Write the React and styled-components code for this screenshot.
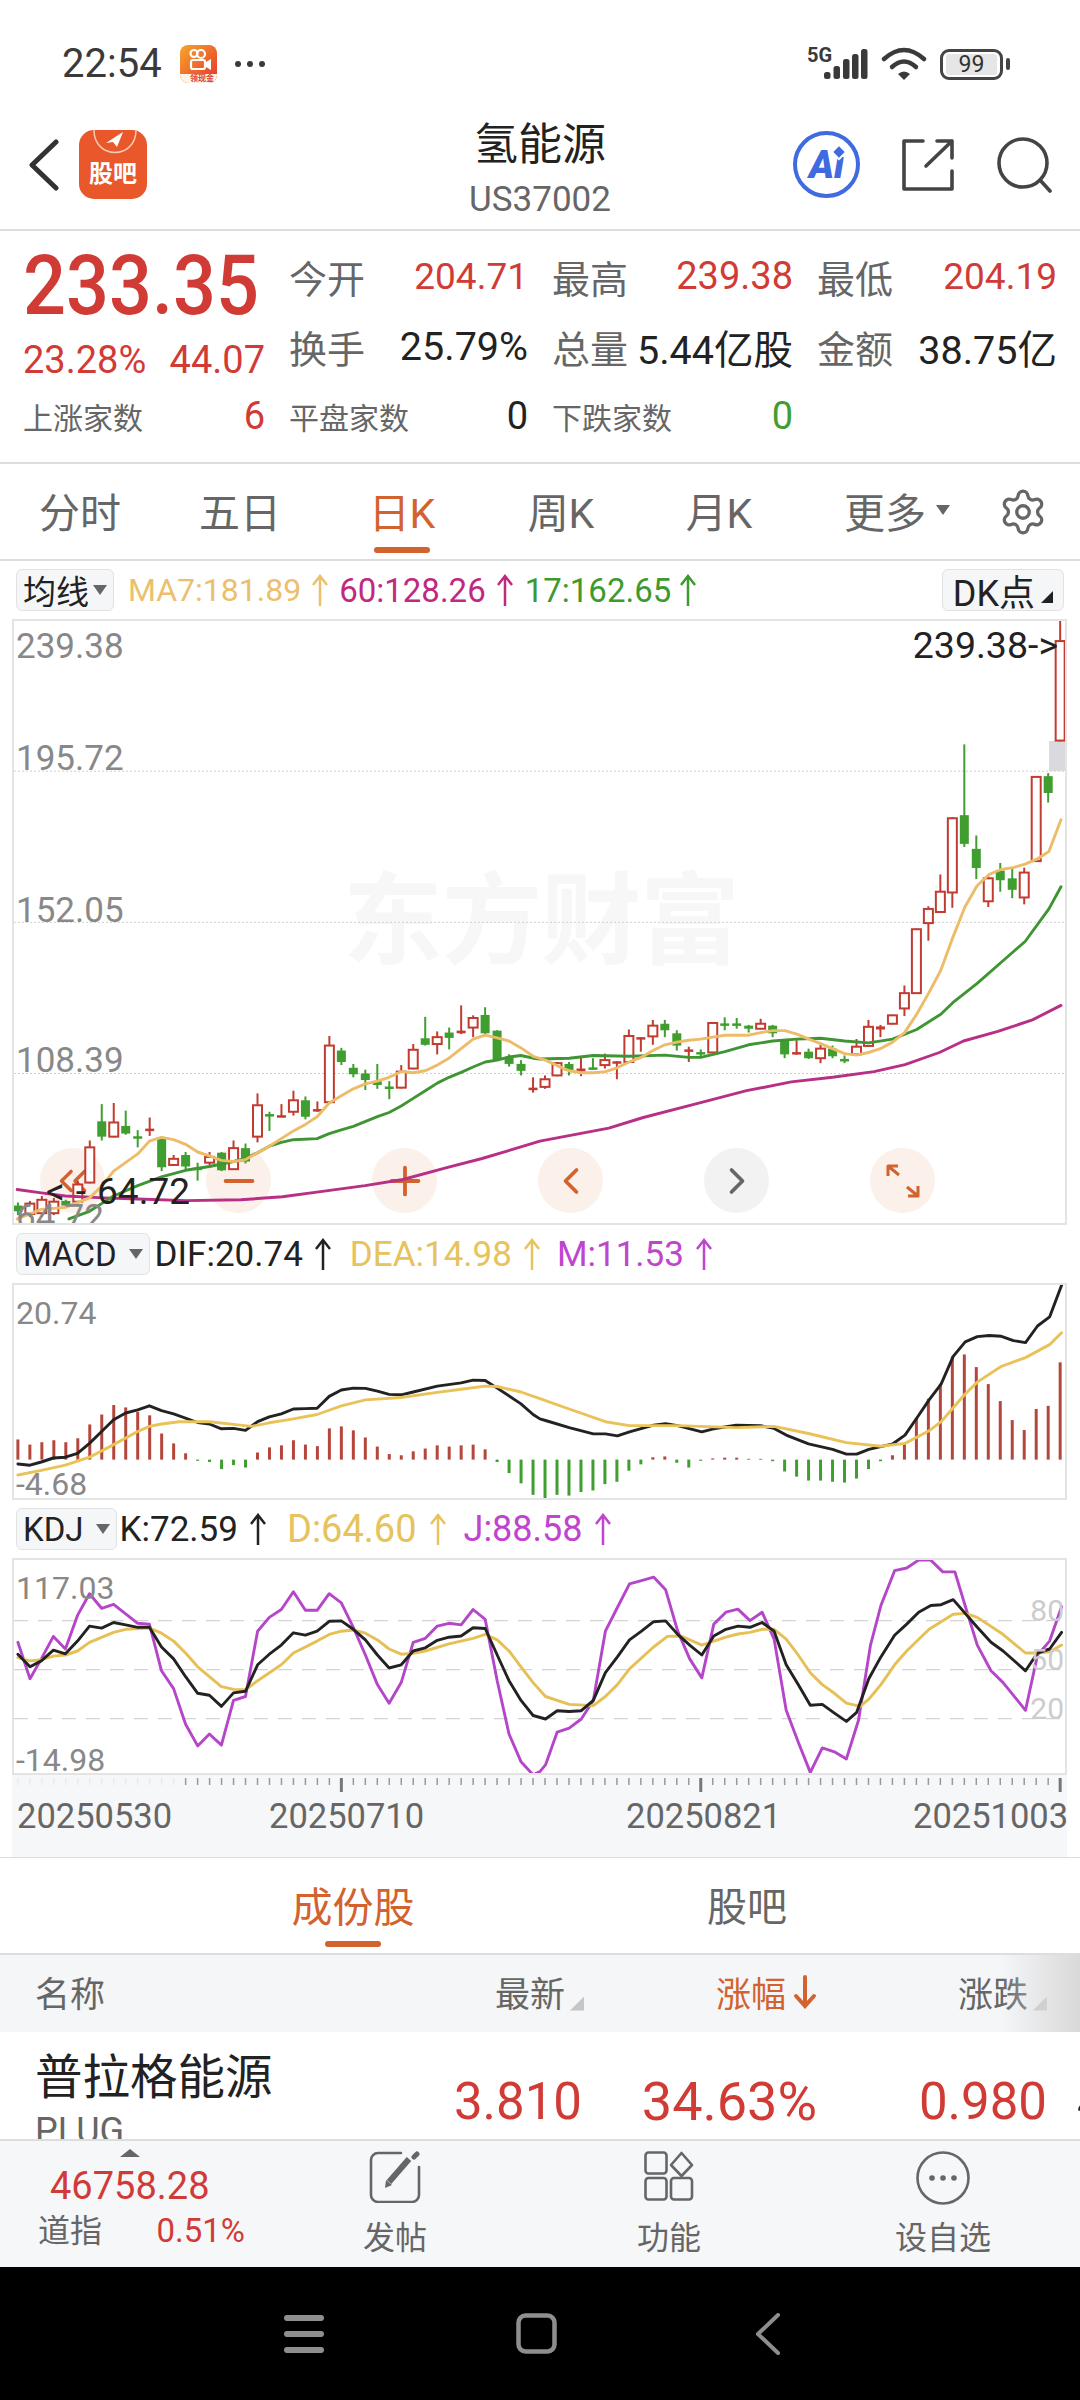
import React from "react";
import styled, { createGlobalStyle } from "styled-components";
import { ChevronLeft, ChevronRight, ChevronsLeft, Minus, Plus, Settings } from "lucide-react";

const RED = "#d13b36";
const GREEN = "#3f9e2f";
const ORANGE = "#d2622e";
const GOLD = "#e6c35c";
const PURPLE = "#bf45cf";

const GlobalStyle = createGlobalStyle`
  html, body {
    margin: 0;
    padding: 0;
    background: #fff;
    font-family: Roboto, "Noto Sans CJK SC", sans-serif;
  }
  * { box-sizing: border-box; }
`;

const Page = styled.div`
  width: 1080px;
  height: 2400px;
  overflow: hidden;
  display: flex;
  flex-direction: column;
  background: #fff;
  color: #222;
`;

/* status bar */
const StatusBar = styled.div`
  height: 100px;
  padding: 28px 70px 0 62px;
  display: flex;
  align-items: center;
  color: #3a3a3a;
`;
const Clock = styled.div`
  font-size: 40px;
  line-height: 44px;
  width: 118px;
`;
const MoreDots = styled.div`
  margin-left: 18px;
  display: flex;
  gap: 6px;
  i {
    width: 6px;
    height: 6px;
    border-radius: 50%;
    background: #3a3a3a;
  }
`;
const StatusRight = styled.div`
  margin-left: auto;
  display: flex;
  align-items: center;
  gap: 13px;
`;
const Battery = styled.div`
  position: relative;
  width: 63px;
  height: 31px;
  border: 3px solid #444;
  border-radius: 9px;
  padding: 2px 3px;
  margin-right: 7px;
  &::after {
    content: "";
    position: absolute;
    right: -10px;
    top: 6px;
    width: 4px;
    height: 12px;
    border-radius: 2px;
    background: #444;
  }
`;
const BatteryFill = styled.div`
  height: 100%;
  background: #e6e6e6;
  border-radius: 3px;
  display: flex;
  align-items: center;
  justify-content: center;
  font-size: 23px;
  line-height: 1;
  color: #333;
`;

/* header */
const Header = styled.div`
  height: 131px;
  border-bottom: 2px solid #ddd;
  display: grid;
  grid-template-columns: 1fr auto 1fr;
  align-items: center;
`;
const HeaderLeft = styled.div`
  padding-left: 29px;
  display: flex;
  align-items: center;
  gap: 20px;
`;
const Logo = styled.div`
  position: relative;
  width: 68px;
  height: 69px;
  border-radius: 15px;
  background: #e9582a;
  overflow: hidden;
  color: #fff;
  font-size: 24px;
  font-weight: 700;
  line-height: 24px;
  text-align: center;
  padding-top: 32px;
  white-space: nowrap;
  svg {
    position: absolute;
    left: 0;
    top: 0;
  }
`;
const TitleBlock = styled.div`
  padding-top: 10px;
  text-align: center;
`;
const Title = styled.div`
  font-size: 44px;
  line-height: 52px;
  color: #222;
`;
const SubTitle = styled.div`
  margin-top: 9px;
  font-size: 35px;
  line-height: 40px;
  color: #666;
`;
const HeaderRight = styled.div`
  padding-right: 28px;
  display: flex;
  align-items: center;
  justify-content: flex-end;
  gap: 41px;
`;
const AiBadge = styled.div`
  position: relative;
  width: 67px;
  height: 67px;
  border: 4px solid #3f6ae0;
  border-radius: 50%;
  display: flex;
  align-items: center;
  justify-content: center;
  color: #3f6ae0;
  font-size: 38px;
  font-weight: 900;
  font-style: italic;
  &::after {
    content: "";
    position: absolute;
    left: 38px;
    top: 13px;
    width: 8px;
    height: 8px;
    background: #3f6ae0;
    transform: rotate(45deg);
    box-shadow: 0 0 0 2px #fff;
  }
`;

/* quote block */
const Quote = styled.div`
  height: 233px;
  padding: 10px 0 0 23px;
  border-bottom: 2px solid #ddd;
  display: grid;
  grid-template-columns: 242px 239px 241px 240px;
  grid-auto-rows: 70px;
  column-gap: 24px;
`;
const PriceBlock = styled.div`
  grid-row: span 2;
  display: flex;
  flex-direction: column;
`;
const Price = styled.div`
  font-size: 84px;
  line-height: 90px;
  font-weight: 500;
  color: ${RED};
  margin-top: 0;
  transform: scaleX(0.9);
  transform-origin: left center;
  white-space: nowrap;
`;
const PriceChange = styled.div`
  margin-top: 7px;
  display: flex;
  justify-content: space-between;
  font-size: 38px;
  line-height: 44px;
  color: ${RED};
`;
const Cell = styled.div`
  display: flex;
  align-items: center;
  justify-content: space-between;
  white-space: nowrap;
`;
const CellLabel = styled.span`
  font-size: ${({ $small }) => ($small ? "30px" : "38px")};
  color: #666;
`;
const CellValue = styled.span`
  font-size: ${({ $size }) => $size || 37}px;
  color: ${({ $color }) => $color || "#222"};
`;

/* tabs */
const PeriodTabs = styled.div`
  height: 97px;
  border-bottom: 2px solid #ddd;
  display: flex;
  align-items: center;
`;
const Tab = styled.div`
  position: relative;
  width: ${({ $width }) => $width}px;
  height: 95px;
  padding-bottom: 4px;
  display: flex;
  align-items: center;
  justify-content: center;
  font-size: ${({ $size }) => $size || 41}px;
  color: ${({ $active }) => ($active ? ORANGE : "#666")};
  &::after {
    content: "";
    display: ${({ $active }) => ($active ? "block" : "none")};
    position: absolute;
    left: 50%;
    bottom: 6px;
    width: 56px;
    height: 6px;
    margin-left: -28px;
    border-radius: 3px;
    background: ${ORANGE};
  }
`;
const Caret = styled.i`
  display: inline-block;
  margin-left: ${({ $gap }) => $gap || 6}px;
  border-left: 7px solid transparent;
  border-right: 7px solid transparent;
  border-top: 10px solid #666;
`;
const GearSlot = styled.div`
  margin-left: 4px;
  display: flex;
  color: #666;
`;

/* charts */
const ChartSection = styled.div`
  padding: 0 13px 0 12px;
  border-bottom: 1px solid #ddd;
`;
const IndicatorBar = styled.div`
  height: 58px;
  padding: 0 3px 0 4px;
  display: flex;
  align-items: center;
  white-space: nowrap;
`;
const IndicatorSelect = styled.div`
  height: 42px;
  padding: 0 ${({ $right }) => ($right ? 10 : 6)}px;
  margin-right: ${({ $gap }) => $gap}px;
  margin-left: ${({ $right }) => ($right ? "auto" : "0")};
  display: flex;
  align-items: center;
  background: #f5f6f8;
  border: 1px solid #e2e2e2;
  border-radius: 6px;
  font-size: ${({ $size }) => $size || 33}px;
  color: #222;
`;
const CornerMark = styled.i`
  width: 12px;
  height: 12px;
  margin: 14px 0 0 6px;
  background: #222;
  clip-path: polygon(100% 0, 100% 100%, 0 100%);
`;
const Reading = styled.span`
  display: inline-flex;
  align-items: center;
  gap: ${({ $arrowGap }) => $arrowGap || 10}px;
  margin-right: ${({ $gap }) => $gap}px;
  font-size: ${({ $size }) => $size || 33}px;
  color: ${({ $color }) => $color};
`;
const ChartBox = styled.div`
  position: relative;
  height: ${({ $height }) => $height}px;
  border: 2px solid #e4e4e4;
  overflow: hidden;
  svg.plot {
    position: relative;
    z-index: 1;
    display: block;
  }
`;
const AxisLabel = styled.div`
  position: absolute;
  z-index: 2;
  top: ${({ $top }) => $top}px;
  left: ${({ $right, $left }) => ($right === undefined ? `${$left ?? 2}px` : "auto")};
  right: ${({ $right }) => ($right === undefined ? "auto" : `${$right}px`)};
  font-size: ${({ $size }) => $size || 35}px;
  line-height: 40px;
  color: ${({ $color }) => $color || "#888"};
  white-space: nowrap;
`;
const PointerHead = styled.span`
  letter-spacing: 11px;
`;
const Watermark = styled.div`
  position: absolute;
  left: 329px;
  top: 249px;
  font-size: 100px;
  line-height: 104px;
  font-weight: 700;
  letter-spacing: -1px;
  color: #f7f7f7;
  white-space: nowrap;
`;
const ZoomRow = styled.div`
  position: absolute;
  left: 26px;
  top: 527px;
  display: flex;
  gap: 101px;
`;
const ZoomButton = styled.div`
  width: 65px;
  height: 65px;
  border-radius: 50%;
  display: flex;
  align-items: center;
  justify-content: center;
  background: ${({ $muted }) => ($muted ? "#f2f2f2" : "#fbf1ea")};
  color: ${({ $muted }) => ($muted ? "#666" : ORANGE)};
`;
const DateStrip = styled.div`
  height: 82px;
  background: #f6f7f9;
  svg {
    display: block;
  }
`;
const DateRow = styled.div`
  padding-left: 5px;
  display: grid;
  grid-template-columns: 252px 357px 287px 1fr;
  font-size: 34.5px;
  line-height: 46px;
  color: #666;
`;

/* list */
const SubTabs = styled.div`
  height: 97px;
  padding-left: 156px;
  border-bottom: 2px solid #ddd;
  display: flex;
`;
const ListGrid = styled.div`
  padding-left: 35px;
  display: grid;
  grid-template-columns: 400px 149px 233px 230px 120px;
`;
const TableHead = styled(ListGrid)`
  position: relative;
  height: 77px;
  padding-bottom: 4px;
  align-items: center;
  background: #f5f6f8;
  font-size: 35px;
  color: #666;
  &::after {
    content: "";
    position: absolute;
    right: 0;
    top: 0;
    bottom: 0;
    width: 80px;
    background: linear-gradient(to right, rgba(217, 217, 217, 0), #d9d9d9);
  }
`;
const HeadCell = styled.div`
  display: flex;
  align-items: center;
  justify-content: flex-end;
  color: ${({ $active }) => ($active ? ORANGE : "inherit")};
`;
const SortMark = styled.i`
  width: 14px;
  height: 14px;
  margin: 24px 0 0 5px;
  background: #c6c6c6;
  clip-path: polygon(100% 0, 100% 100%, 0 100%);
`;
const TableRow = styled(ListGrid)`
  height: 107px;
  overflow: hidden;
  white-space: nowrap;
`;
const StockName = styled.div`
  padding-top: 18px;
  font-size: 47.5px;
  line-height: 56px;
  color: #222;
`;
const StockCode = styled.div`
  margin-top: 4px;
  font-size: 36px;
  line-height: 42px;
  color: #666;
`;
const RowValue = styled.div`
  padding: 40px ${({ $pad }) => $pad || 0}px 0 0;
  font-size: ${({ $size }) => $size || 51}px;
  line-height: 60px;
  text-align: right;
  color: ${RED};
`;
const RowOverflow = styled.div`
  padding: 40px 0 0 30px;
  font-size: 50px;
  line-height: 60px;
  color: #222;
`;

/* bottom bar */
const BottomBar = styled.div`
  height: 128px;
  border-top: 2px solid #ddd;
  background: #f6f7f9;
  display: grid;
  grid-template-columns: 258px repeat(3, 274px);
`;
const IndexBlock = styled.div`
  padding: 8px 0 0 38px;
`;
const IndexCaret = styled.i`
  display: block;
  width: 0;
  margin-left: 82px;
  border-left: 10px solid transparent;
  border-right: 10px solid transparent;
  border-bottom: 8px solid #666;
`;
const IndexValue = styled.div`
  margin: 7px 0 0 12px;
  font-size: 38px;
  line-height: 44px;
  color: ${RED};
`;
const IndexFoot = styled.div`
  display: flex;
  justify-content: space-between;
  width: 207px;
  font-size: 32px;
  line-height: 46px;
  color: #666;
  b {
    font-weight: 400;
    font-size: 33px;
    color: ${RED};
  }
`;
const Action = styled.div`
  padding-top: 10px;
  display: grid;
  grid-template-rows: 64px 46px;
  justify-items: center;
  font-size: 32px;
  line-height: 46px;
  color: #666;
`;

/* system nav */
const NavBar = styled.div`
  flex: 1;
  padding-left: 284px;
  background: #000;
  display: flex;
  align-items: center;
  gap: 192px;
`;
const NavBackSlot = styled.div`
  display: flex;
  margin-left: 6px;
`;

const S = (pts) => pts.map(([x, y]) => [x + 1568, y]);

// [bodyTop, bodyBottom, wickTop, wickBottom, up?] in plot units
const candles = [
  [1530, 1545, 1522, 1555, 0], [1525, 1552, 1518, 1560, 1], [1515, 1550, 1505, 1560, 1], [1520, 1550, 1510, 1555, 1],
  [1518, 1530, 1515, 1535, 0], [1475, 1520, 1465, 1525, 1], [1378, 1470, 1360, 1472, 1], [1310, 1350, 1265, 1360, 0],
  [1313, 1350, 1262, 1352, 1], [1322, 1342, 1282, 1345, 0], [1349, 1351, 1333, 1378, 0], [1329, 1332, 1300, 1348, 1],
  [1352, 1430, 1350, 1440, 0], [1408, 1424, 1398, 1426, 1], [1398, 1428, 1390, 1435, 0], [1431, 1433, 1418, 1465, 0],
  [1403, 1418, 1390, 1425, 1], [1392, 1438, 1390, 1440, 0], [1380, 1435, 1360, 1437, 1], [1380, 1415, 1368, 1420, 0],
  [1268, 1350, 1237, 1365, 1], [1291, 1294, 1285, 1335, 0], [1294, 1297, 1265, 1298, 1], [1255, 1285, 1230, 1295, 1],
  [1255, 1298, 1245, 1305, 0], [1278, 1282, 1258, 1285, 1], [1112, 1260, 1087, 1262, 1], [1125, 1155, 1118, 1163, 0],
  [1170, 1187, 1160, 1195, 0], [1185, 1202, 1175, 1228, 0], [1205, 1215, 1160, 1225, 0], [1219, 1222, 1205, 1252, 0],
  [1180, 1222, 1163, 1224, 1], [1123, 1172, 1108, 1174, 1], [1093, 1110, 1037, 1112, 0], [1090, 1108, 1075, 1135, 1],
  [1078, 1092, 1065, 1122, 0], [1073, 1080, 1007, 1082, 1], [1040, 1065, 1033, 1090, 1], [1032, 1080, 1012, 1082, 0],
  [1073, 1150, 1072, 1152, 0], [1143, 1160, 1135, 1167, 0], [1160, 1178, 1150, 1190, 0], [1222, 1227, 1195, 1235, 1],
  [1200, 1220, 1190, 1225, 1], [1158, 1190, 1155, 1192, 1], [1160, 1178, 1155, 1190, 0], [1172, 1180, 1140, 1192, 1],
  [1169, 1172, 1145, 1175, 0], [1150, 1163, 1133, 1172, 1], [1153, 1157, 1153, 1200, 1], [1087, 1155, 1070, 1157, 1],
  [1090, 1094, 1090, 1128, 1], [1060, 1088, 1045, 1110, 1], [1055, 1072, 1045, 1090, 0], [1080, 1112, 1072, 1125, 0],
  [1122, 1126, 1115, 1155, 1], [1129, 1132, 1122, 1140, 0], [1053, 1130, 1051, 1132, 1], [1054, 1057, 1038, 1072, 0],
  [1054, 1057, 1040, 1068, 0], [1060, 1068, 1058, 1078, 0], [1055, 1068, 1042, 1070, 1], [1060, 1080, 1058, 1090, 0],
  [1100, 1135, 1098, 1145, 0], [1129, 1135, 1098, 1136, 1], [1128, 1145, 1120, 1147, 0], [1120, 1145, 1110, 1158, 1],
  [1120, 1140, 1112, 1145, 0], [1147, 1150, 1138, 1158, 0], [1115, 1135, 1095, 1137, 1], [1063, 1113, 1045, 1115, 1],
  [1062, 1070, 1058, 1090, 1], [1033, 1055, 1031, 1057, 1], [975, 1015, 955, 1035, 1], [808, 975, 806, 977, 1],
  [755, 792, 748, 838, 1], [710, 763, 665, 765, 1], [518, 712, 515, 752, 1], [510, 585, 325, 593, 0],
  [598, 648, 563, 677, 0], [675, 735, 670, 750, 1], [655, 680, 635, 710, 0], [675, 705, 650, 727, 0],
  [660, 725, 647, 743, 1], [410, 630, 408, 632, 1], [408, 452, 400, 477, 0], [55, 315, 0, 317, 1],
];

const ma7 = [
  [50, 1565], [120, 1540], [190, 1535], [260, 1510], [295, 1480], [330, 1440], [400, 1395], [434, 1362], [469, 1352], [504, 1358],
  [539, 1370], [574, 1390], [608, 1400], [643, 1412], [678, 1415], [713, 1410], [748, 1392], [782, 1375], [817, 1355], [852, 1335],
  [887, 1318], [921, 1298], [956, 1262], [991, 1243], [1026, 1225], [1061, 1212], [1096, 1205], [1130, 1195], [1165, 1180], [1200, 1183],
  [1235, 1178], [1270, 1163], [1304, 1145], [1339, 1120], [1374, 1095], [1409, 1085], [1444, 1092], [1478, 1100], [1513, 1118], [1548, 1140],
  ...S([[16, 1150], [51, 1165], [85, 1178], [120, 1183], [155, 1183], [190, 1180], [224, 1170], [259, 1155], [294, 1143], [328, 1125],
    [363, 1110], [398, 1103], [432, 1098], [467, 1095], [502, 1090], [537, 1085], [572, 1085], [606, 1085], [641, 1078], [676, 1073],
    [711, 1073], [746, 1082], [781, 1095], [815, 1107], [850, 1120], [885, 1133], [919, 1137], [954, 1130], [989, 1120], [1024, 1103],
    [1059, 1078], [1094, 1030], [1129, 975], [1164, 915], [1199, 830], [1234, 750], [1269, 695], [1304, 665], [1339, 652], [1374, 647],
    [1409, 638], [1443, 625], [1478, 605], [1513, 522]]),
];
const ma17 = [
  [200, 1565], [260, 1545], [295, 1525], [330, 1505], [400, 1478], [469, 1455], [539, 1438], [608, 1428], [678, 1415], [713, 1407],
  [748, 1392], [782, 1375], [817, 1365], [852, 1358], [921, 1355], [956, 1342], [991, 1332], [1026, 1323], [1096, 1298], [1130, 1287],
  [1165, 1270], [1200, 1250], [1235, 1230], [1270, 1210], [1304, 1195], [1339, 1182], [1374, 1168], [1409, 1155], [1444, 1150], [1478, 1142],
  [1513, 1138], [1548, 1145],
  ...S([[0, 1147], [85, 1145], [155, 1138], [259, 1140], [363, 1137], [432, 1143], [467, 1143], [537, 1128], [606, 1110], [676, 1100],
    [746, 1095], [815, 1093], [885, 1100], [954, 1105], [1024, 1095], [1094, 1070], [1164, 1030], [1199, 1000], [1269, 950], [1339, 895],
    [1409, 840], [1478, 755], [1513, 697]]),
];
const ma60 = [
  [50, 1488], [120, 1497], [190, 1505], [300, 1510], [400, 1513], [540, 1517], [700, 1515], [820, 1507], [920, 1495], [1060, 1478],
  [1170, 1462], [1300, 1430], [1400, 1407],
  ...S([[0, 1362], [100, 1345], [200, 1328], [300, 1300], [450, 1265], [600, 1230], [730, 1207], [850, 1195], [970, 1180], [1060, 1162],
    [1160, 1130], [1230, 1100], [1330, 1075], [1430, 1045], [1513, 1007]]),
];

const macdBars = [
  555, 568, 562, 557, 562, 552, 517, 492, 468, 474, 485, 494, 540, 565, 590, 609, 612, 630, 620, 626,
  588, 575, 570, 557, 568, 572, 527, 522, 532, 550, 573, 592, 595, 585, 578, 570, 573, 570, 568, 580,
  612, 640, 666, 695, 705, 695, 697, 688, 684, 668, 662, 634, 618, 600, 598, 614, 626, 609, 603, 601,
  601, 604, 604, 610, 636, 649, 659, 659, 662, 664, 654, 630, 610, 595, 567, 500, 452, 414, 345, 340,
  372, 415, 458, 506, 531, 478, 470, 360,
];
const dif = [
  [52, 617], [87, 620], [120, 612], [155, 602], [190, 600], [225, 590], [260, 565], [295, 535], [330, 505], [365, 488], [400, 480],
  [434, 470], [469, 482], [504, 490], [574, 512], [608, 516], [643, 528], [678, 527], [713, 532], [748, 510], [782, 498], [817, 490],
  [852, 478], [887, 477], [921, 476], [956, 446], [991, 430], [1026, 425], [1061, 426], [1096, 433], [1130, 441], [1165, 442], [1200, 435],
  [1270, 420], [1339, 412], [1374, 405], [1409, 406], [1444, 425], [1513, 465],
  ...S([[-20, 492], [0, 503], [16, 507], [85, 525], [155, 541], [190, 541], [225, 546], [260, 536], [330, 519], [365, 515], [400, 520], [470, 536],
    [504, 528], [570, 519], [640, 520], [680, 527], [715, 544], [780, 566], [850, 580], [890, 592], [920, 592], [955, 580], [1025, 566],
    [1060, 544], [1095, 500], [1130, 455], [1165, 415], [1200, 345], [1235, 308], [1270, 295], [1305, 292], [1340, 294], [1375, 305],
    [1410, 310], [1445, 268], [1480, 245], [1515, 165]]),
];
const dea = [
  [52, 645], [120, 633], [190, 620], [260, 600], [330, 568], [400, 535], [434, 522], [469, 516], [520, 510], [608, 510], [678, 517],
  [730, 522], [782, 513], [852, 503], [921, 492], [991, 470], [1061, 455], [1165, 449], [1270, 436], [1339, 428], [1409, 420], [1444, 421],
  [1513, 435],
  ...S([[0, 452], [85, 478], [190, 510], [260, 520], [400, 520], [570, 525], [680, 522], [780, 540], [890, 563], [990, 572], [1060, 565],
    [1130, 533], [1165, 510], [1200, 475], [1235, 440], [1270, 410], [1340, 370], [1410, 348], [1480, 315], [1515, 285]]),
];
const kLine = [
  [52, 1098], [87, 1130], [120, 1115], [155, 1088], [190, 1097], [225, 1065], [260, 1027], [295, 1032], [330, 1018], [365, 1024], [400, 1030],
  [434, 1030], [469, 1080], [504, 1110], [539, 1155], [574, 1197], [608, 1202], [643, 1230], [678, 1196], [713, 1192], [748, 1125], [782, 1098],
  [817, 1075], [852, 1044], [887, 1050], [921, 1040], [956, 1015], [991, 1014], [1026, 1035], [1061, 1062], [1096, 1100], [1130, 1133],
  [1165, 1125], [1200, 1090], [1235, 1082], [1270, 1063], [1304, 1055], [1339, 1052], [1374, 1031], [1409, 1033], [1444, 1100], [1478, 1165],
  [1513, 1215], [1548, 1253],
  ...S([[16, 1262], [50, 1241], [85, 1243], [120, 1241], [155, 1215], [190, 1145], [225, 1105], [260, 1062], [295, 1040], [330, 1016], [365, 1014],
    [400, 1048], [435, 1075], [470, 1100], [505, 1052], [540, 1035], [575, 1027], [610, 1030], [645, 1018], [680, 1040], [715, 1125], [750, 1175],
    [785, 1227], [820, 1225], [855, 1247], [890, 1268], [920, 1245], [955, 1160], [990, 1105], [1030, 1050], [1065, 1022], [1100, 992], [1135, 975],
    [1165, 973], [1200, 960], [1235, 995], [1270, 1030], [1310, 1068], [1345, 1090], [1410, 1140], [1445, 1095], [1480, 1085], [1515, 1043]]),
];
const dLine = [
  [52, 1107], [87, 1115], [120, 1112], [155, 1103], [190, 1100], [225, 1090], [260, 1068], [330, 1043], [365, 1035], [434, 1032], [469, 1045],
  [504, 1065], [539, 1095], [574, 1130], [643, 1180], [678, 1187], [713, 1188], [748, 1165], [817, 1125], [852, 1095], [921, 1065], [956, 1048],
  [991, 1040], [1026, 1037], [1061, 1045], [1096, 1062], [1130, 1085], [1165, 1098], [1200, 1096], [1235, 1090], [1304, 1072], [1374, 1058],
  [1409, 1048], [1444, 1062], [1478, 1090], [1513, 1130], [1548, 1170],
  ...S([[16, 1205], [50, 1215], [85, 1225], [155, 1228], [190, 1205], [225, 1175], [260, 1135], [330, 1080], [370, 1053], [410, 1052], [470, 1075],
    [540, 1055], [575, 1047], [610, 1043], [645, 1035], [680, 1035], [715, 1060], [750, 1100], [785, 1145], [820, 1175], [855, 1197], [890, 1222],
    [930, 1230], [955, 1212], [990, 1175], [1030, 1125], [1065, 1090], [1130, 1035], [1200, 997], [1235, 995], [1270, 1005], [1340, 1045],
    [1410, 1095], [1445, 1095], [1480, 1092], [1515, 1075]]),
];
const jLine = [
  [52, 1068], [87, 1160], [120, 1110], [155, 1053], [190, 1085], [225, 1000], [260, 945], [295, 982], [330, 972], [400, 1020], [434, 1022],
  [469, 1140], [504, 1185], [539, 1275], [574, 1330], [608, 1300], [643, 1328], [678, 1215], [713, 1205], [748, 1040], [782, 1005], [817, 985],
  [852, 940], [887, 987], [921, 987], [956, 945], [991, 968], [1026, 1030], [1061, 1100], [1096, 1175], [1130, 1222], [1165, 1170], [1200, 1068],
  [1235, 1058], [1270, 1027], [1304, 1020], [1339, 1024], [1374, 985], [1409, 1010], [1444, 1165], [1478, 1300], [1513, 1370], [1548, 1403],
  ...S([[0, 1395], [16, 1378], [50, 1295], [85, 1285], [120, 1262], [155, 1215], [190, 1040], [225, 980], [260, 920], [295, 912], [330, 903], [365, 935],
    [400, 1040], [435, 1110], [470, 1158], [505, 1022], [540, 992], [575, 984], [610, 1013], [645, 992], [680, 1060], [715, 1240], [750, 1320],
    [785, 1397], [820, 1335], [855, 1345], [890, 1363], [925, 1265], [960, 1075], [990, 975], [1030, 887], [1065, 880], [1100, 860], [1135, 860],
    [1170, 890], [1205, 890], [1240, 990], [1270, 1075], [1310, 1140], [1345, 1170], [1410, 1240], [1445, 1100], [1480, 1065], [1515, 978]]),
];

const px = (x) => x / 2.904 - 14;
const slotX = (i) => 17.9 + 11.98 * i - 14;
const toPoints = (pts, fy) => pts.map(([x, y]) => `${px(x).toFixed(1)},${fy(y).toFixed(1)}`).join(" ");

const mainY = (y) => y / 2.613 - 1;
const macdY = (y) => y / 2.529 - 65;
const kdjY = (y) => y / 2.529 - 340;

const Curve = ({ pts, fy, color, width = 2.9 }) => (
  <polyline points={toPoints(pts, fy)} fill="none" stroke={color} strokeWidth={width} strokeLinejoin="round" strokeLinecap="round" />
);

const MainPlot = () => (
  <svg className="plot" width="1051" height="602" viewBox="0 0 1051 602">
    {[395, 790, 1185].map((y) => (
      <line key={y} x1="0" x2="1051" y1={mainY(y)} y2={mainY(y)} stroke="#cfcfcf" strokeWidth="1" strokeDasharray="2 2" />
    ))}
    <rect x="1035" y="120" width="16" height="30" fill="#d9d9de" />
    {candles.map(([top, bottom, high, low, up], i) => {
      const x = slotX(i);
      const color = up ? "#c23b30" : GREEN;
      const y1 = mainY(top);
      const h = Math.max(mainY(bottom) - y1, 2.5);
      const flat = h < 4;
      return (
        <g key={i}>
          <line x1={x} x2={x} y1={mainY(high)} y2={mainY(low)} stroke={color} strokeWidth="2" />
          {up && !flat ? (
            <rect x={x - 4.5} y={y1} width="9" height={h} fill="#fff" stroke={color} strokeWidth="2" />
          ) : (
            <rect x={x - 4.5} y={y1} width="9" height={h} fill={color} />
          )}
        </g>
      );
    })}
    <Curve pts={ma60} fy={mainY} color="#b82f86" />
    <Curve pts={ma17} fy={mainY} color="#3f9433" />
    <Curve pts={ma7} fy={mainY} color="#ecbc68" />
  </svg>
);

const MacdPlot = () => (
  <svg className="plot" width="1051" height="213" viewBox="0 0 1051 213">
    {macdBars.map((v, i) => (
      <line key={i} x1={slotX(i)} x2={slotX(i)} y1={macdY(606)} y2={macdY(v)} stroke={v < 606 ? "#b5463c" : GREEN} strokeWidth="3" />
    ))}
    <Curve pts={dif} fy={macdY} color="#222" />
    <Curve pts={dea} fy={macdY} color="#e9c258" />
  </svg>
);

const KdjPlot = () => (
  <svg className="plot" width="1051" height="213" viewBox="0 0 1051 213">
    {[1013, 1137, 1261].map((y) => (
      <line key={y} x1="0" x2="1051" y1={kdjY(y)} y2={kdjY(y)} stroke="#d4d4d4" strokeWidth="1.2" strokeDasharray="14 10" />
    ))}
    <Curve pts={jLine} fy={kdjY} color="#b546c9" />
    <Curve pts={dLine} fy={kdjY} color="#e6bf55" />
    <Curve pts={kLine} fy={kdjY} color="#222" />
  </svg>
);

const TickRuler = () => (
  <svg width="1055" height="18" viewBox="0 0 1055 18">
    {candles.map((_, i) => {
      const major = i === 27 || i === 57 || i === 87;
      const x = 5.9 + 11.98 * i;
      return (
        <line
          key={i}
          x1={x}
          x2={x}
          y1="3"
          y2={major ? 17 : 10}
          stroke={major ? "#777" : "#999"}
          strokeWidth={major ? 3 : 1.5}
          opacity={i < 14 ? 0.12 : 1}
        />
      );
    })}
  </svg>
);

const UpArrow = ({ color }) => (
  <svg width="18" height="32" viewBox="0 0 18 32" fill="none" stroke={color} strokeWidth="2.5">
    <path d="M9 3V32M2 11L9 2L16 11" />
  </svg>
);

const AppIcon = () => (
  <svg width="37" height="38" viewBox="0 0 37 38">
    <defs>
      <linearGradient id="appBg" x1="0" y1="0" x2="1" y2="1">
        <stop offset="0" stopColor="#f6a82a" />
        <stop offset="1" stopColor="#e5322f" />
      </linearGradient>
    </defs>
    <rect width="37" height="38" rx="8" fill="url(#appBg)" />
    <path d="M0 29H37V30a8 8 0 0 1-8 8H8a8 8 0 0 1-8-8Z" fill="#fdf3e6" />
    <g fill="none" stroke="#fff" strokeWidth="2.2">
      <circle cx="14" cy="8.5" r="3.5" />
      <circle cx="21" cy="9" r="4" />
      <rect x="11" y="15" width="14" height="9" rx="2" />
    </g>
    <path d="M26 17L31 14V25L26 22Z" fill="#fff" />
    <text x="10" y="36" fontSize="8" fontWeight="700" fill="#d8402e" fontFamily="Noto Sans CJK SC">领现金</text>
  </svg>
);

const SignalIcon = () => (
  <svg width="61" height="34" viewBox="0 0 61 34">
    <text x="0" y="15" fontSize="20" fontWeight="700" fill="#3a3a3a" fontFamily="Roboto">5G</text>
    {[
      [17, 7], [26.5, 13], [36, 20], [45, 25], [54, 30],
    ].map(([x, h]) => (
      <rect key={x} x={x} y={32 - h} width="6.5" height={h} rx="2.5" fill="#3a3a3a" />
    ))}
  </svg>
);

const WifiIcon = () => (
  <svg width="46" height="34" viewBox="0 0 46 34" fill="none" stroke="#3a3a3a" strokeWidth="4.5" strokeLinecap="round">
    <path d="M3 12Q23 -6 43 12" />
    <path d="M11 20Q23 9 35 20" />
    <path d="M17 27Q23 22 29 27L23 33Z" fill="#3a3a3a" stroke="none" />
  </svg>
);

const BackIcon = () => (
  <svg width="30" height="52" viewBox="0 0 30 52" fill="none" stroke="#333" strokeWidth="5" strokeLinecap="round" strokeLinejoin="round">
    <path d="M27 3L3 26L27 49" />
  </svg>
);

const ShareIcon = () => (
  <svg width="54" height="54" viewBox="0 0 54 54" fill="none" stroke="#444" strokeWidth="3.6" strokeLinecap="round" strokeLinejoin="round">
    <path d="M22 3H3V51H51V33" />
    <path d="M25 28L51 3M36 3H51V20" />
  </svg>
);

const SearchIcon = () => (
  <svg width="56" height="56" viewBox="0 0 56 56" fill="none" stroke="#444" strokeWidth="3.6" strokeLinecap="round">
    <circle cx="27" cy="26" r="24" />
    <path d="M44 43L54 54" />
  </svg>
);

const LogoMark = () => (
  <svg width="68" height="32" viewBox="0 0 68 32">
    <path d="M15 0C15 30 57 30 57 0" fill="none" stroke="#f8c9b4" strokeWidth="1.5" />
    <path d="M27 13L44 2L38 17L34 12Z" fill="#fff" />
  </svg>
);

const ExpandIcon = () => (
  <svg width="34" height="34" viewBox="0 0 34 34" fill="none" stroke={ORANGE} strokeWidth="3" strokeLinejoin="round">
    <path d="M2 2L13 11M2 12V2H12" />
    <path d="M32 32L21 23M32 22V32H22" />
  </svg>
);

const SortDownIcon = () => (
  <svg width="24" height="36" viewBox="0 0 24 36" fill="none" stroke={ORANGE} strokeWidth="4" strokeLinecap="round" style={{ marginLeft: 7 }}>
    <path d="M12 3V32M3 22L12 32L21 22" />
  </svg>
);

const PostIcon = () => (
  <svg width="52" height="52" viewBox="0 0 52 52" fill="none" stroke="#666" strokeWidth="2.6" strokeLinecap="round">
    <path d="M32 2H9a7 7 0 0 0-7 7V44a7 7 0 0 0 7 7H43a7 7 0 0 0 7-7V16" />
    <path d="M20 31L40 8" strokeWidth="6" strokeLinecap="butt" />
    <path d="M16 37L17 29L23 34Z" fill="#666" stroke="none" />
    <path d="M45 6L48 3" strokeWidth="5" />
  </svg>
);

const ToolsIcon = () => (
  <svg width="50" height="50" viewBox="0 0 50 50" fill="none" stroke="#666" strokeWidth="2.6" strokeLinejoin="round">
    <rect x="1.5" y="1.5" width="21" height="21" rx="3" />
    <rect x="1.5" y="27" width="21" height="21.5" rx="3" />
    <rect x="27" y="27" width="21" height="21.5" rx="3" />
    <path d="M37.5 2L48 14L37.5 25L27 14Z" />
  </svg>
);

const MoreIcon = () => (
  <svg width="54" height="54" viewBox="0 0 54 54">
    <circle cx="27" cy="27" r="25.5" fill="none" stroke="#666" strokeWidth="2.6" />
    {[16, 27, 38].map((x) => (
      <circle key={x} cx={x} cy="27" r="2.8" fill="#666" />
    ))}
  </svg>
);

const MenuKey = () => (
  <svg width="40" height="38" viewBox="0 0 40 38" fill="#8e8e8e">
    <rect y="0" width="40" height="6" rx="3" />
    <rect y="16" width="40" height="6" rx="3" />
    <rect y="32" width="40" height="6" rx="3" />
  </svg>
);

const HomeKey = () => (
  <svg width="41" height="41" viewBox="0 0 41 41" fill="none" stroke="#8e8e8e" strokeWidth="4.5">
    <rect x="2.5" y="2.5" width="36" height="36" rx="7" />
  </svg>
);

const BackKey = () => (
  <svg width="26" height="42" viewBox="0 0 26 42" fill="none" stroke="#8e8e8e" strokeWidth="4" strokeLinecap="round" strokeLinejoin="round">
    <path d="M23 2L3 21L23 40" />
  </svg>
);

const App = () => (
  <Page>
    <GlobalStyle />

    <StatusBar>
      <Clock>22:54</Clock>
      <AppIcon />
      <MoreDots>
        <i />
        <i />
        <i />
      </MoreDots>
      <StatusRight>
        <SignalIcon />
        <WifiIcon />
        <Battery>
          <BatteryFill>99</BatteryFill>
        </Battery>
      </StatusRight>
    </StatusBar>

    <Header>
      <HeaderLeft>
        <BackIcon />
        <Logo>
          <LogoMark />
          股吧
        </Logo>
      </HeaderLeft>
      <TitleBlock>
        <Title>氢能源</Title>
        <SubTitle>US37002</SubTitle>
      </TitleBlock>
      <HeaderRight>
        <AiBadge>Ai</AiBadge>
        <ShareIcon />
        <SearchIcon />
      </HeaderRight>
    </Header>

    <Quote>
      <PriceBlock>
        <Price>233.35</Price>
        <PriceChange>
          <span>23.28%</span>
          <span>44.07</span>
        </PriceChange>
      </PriceBlock>
      <Cell>
        <CellLabel>今开</CellLabel>
        <CellValue $color={RED}>204.71</CellValue>
      </Cell>
      <Cell>
        <CellLabel>最高</CellLabel>
        <CellValue $color={RED} $size={38}>239.38</CellValue>
      </Cell>
      <Cell>
        <CellLabel>最低</CellLabel>
        <CellValue $color={RED}>204.19</CellValue>
      </Cell>
      <Cell>
        <CellLabel>换手</CellLabel>
        <CellValue $size={39.5}>25.79%</CellValue>
      </Cell>
      <Cell>
        <CellLabel>总量</CellLabel>
        <CellValue $size={39.5}>5.44亿股</CellValue>
      </Cell>
      <Cell>
        <CellLabel>金额</CellLabel>
        <CellValue $size={39.5}>38.75亿</CellValue>
      </Cell>
      <Cell>
        <CellLabel $small>上涨家数</CellLabel>
        <CellValue $color={RED} $size={38}>6</CellValue>
      </Cell>
      <Cell>
        <CellLabel $small>平盘家数</CellLabel>
        <CellValue $size={38}>0</CellValue>
      </Cell>
      <Cell>
        <CellLabel $small>下跌家数</CellLabel>
        <CellValue $color={GREEN} $size={38}>0</CellValue>
      </Cell>
    </Quote>

    <PeriodTabs>
      <Tab $width={160}>分时</Tab>
      <Tab $width={160}>五日</Tab>
      <Tab $width={164} $active>日K</Tab>
      <Tab $width={154}>周K</Tab>
      <Tab $width={162}>月K</Tab>
      <Tab $width={194}>
        更多
        <Caret $gap={10} />
      </Tab>
      <GearSlot>
        <Settings size={50} strokeWidth={1.6} />
      </GearSlot>
    </PeriodTabs>

    <ChartSection>
      <IndicatorBar>
        <IndicatorSelect $gap={14}>
          均线
          <Caret $gap={4} />
        </IndicatorSelect>
        <Reading $gap={10} $size={32} $color="#ecbf6d">
          MA7:181.89
          <UpArrow color="#ecbf6d" />
        </Reading>
        <Reading $gap={11} $color="#c0297f">
          60:128.26
          <UpArrow color="#c0297f" />
        </Reading>
        <Reading $gap={0} $arrowGap={8} $color="#3d9a2e">
          17:162.65
          <UpArrow color="#3d9a2e" />
        </Reading>
        <IndicatorSelect $right $gap={0} $size={36}>
          DK点
          <CornerMark />
        </IndicatorSelect>
      </IndicatorBar>

      <ChartBox $height={606}>
        <Watermark>东方财富</Watermark>
        <ZoomRow>
          <ZoomButton><ChevronsLeft size={46} strokeWidth={1.8} /></ZoomButton>
          <ZoomButton><Minus size={46} strokeWidth={2} /></ZoomButton>
          <ZoomButton><Plus size={46} strokeWidth={2} /></ZoomButton>
          <ZoomButton><ChevronLeft size={44} strokeWidth={2} /></ZoomButton>
          <ZoomButton $muted><ChevronRight size={44} strokeWidth={2} /></ZoomButton>
          <ZoomButton><ExpandIcon /></ZoomButton>
        </ZoomRow>
        <MainPlot />
        <AxisLabel $top={6}>239.38</AxisLabel>
        <AxisLabel $top={118}>195.72</AxisLabel>
        <AxisLabel $top={270}>152.05</AxisLabel>
        <AxisLabel $top={420}>108.39</AxisLabel>
        <AxisLabel $top={577}>64.72</AxisLabel>
        <AxisLabel $top={4} $right={7} $size={37.5} $color="#222">239.38-&gt;</AxisLabel>
        <AxisLabel $top={551} $left={32} $size={37} $color="#222"><PointerHead>&lt;-</PointerHead>64.72</AxisLabel>
      </ChartBox>

      <IndicatorBar>
        <IndicatorSelect $gap={5}>
          MACD
          <Caret $gap={12} />
        </IndicatorSelect>
        <Reading $gap={18} $size={35} $arrowGap={11} $color="#222">
          DIF:20.74
          <UpArrow color="#222" />
        </Reading>
        <Reading $gap={16} $size={35} $arrowGap={11} $color={GOLD}>
          DEA:14.98
          <UpArrow color={GOLD} />
        </Reading>
        <Reading $gap={0} $size={35} $arrowGap={11} $color={PURPLE}>
          M:11.53
          <UpArrow color={PURPLE} />
        </Reading>
      </IndicatorBar>

      <ChartBox $height={217}>
        <MacdPlot />
        <AxisLabel $top={8} $size={32}>20.74</AxisLabel>
        <AxisLabel $top={179} $size={32}>-4.68</AxisLabel>
      </ChartBox>

      <IndicatorBar>
        <IndicatorSelect $gap={3}>
          KDJ
          <Caret $gap={12} />
        </IndicatorSelect>
        <Reading $gap={20} $size={35} $arrowGap={11} $color="#222">
          K:72.59
          <UpArrow color="#222" />
        </Reading>
        <Reading $gap={17} $size={38} $arrowGap={12} $color={GOLD}>
          D:64.60
          <UpArrow color={GOLD} />
        </Reading>
        <Reading $gap={0} $size={36} $arrowGap={11} $color={PURPLE}>
          J:88.58
          <UpArrow color={PURPLE} />
        </Reading>
      </IndicatorBar>

      <ChartBox $height={217}>
        <KdjPlot />
        <AxisLabel $top={8} $size={32}>117.03</AxisLabel>
        <AxisLabel $top={180} $size={32}>-14.98</AxisLabel>
        <AxisLabel $top={31} $right={1} $size={30} $color="#ccc">80</AxisLabel>
        <AxisLabel $top={80} $right={1} $size={30} $color="#ccc">50</AxisLabel>
        <AxisLabel $top={129} $right={1} $size={30} $color="#ccc">20</AxisLabel>
      </ChartBox>

      <DateStrip>
        <TickRuler />
        <DateRow>
          <span>20250530</span>
          <span>20250710</span>
          <span>20250821</span>
          <span>20251003</span>
        </DateRow>
      </DateStrip>
    </ChartSection>

    <SubTabs>
      <Tab $width={394} $active>成份股</Tab>
      <Tab $width={394} $size={40}>股吧</Tab>
    </SubTabs>

    <TableHead>
      <div>名称</div>
      <HeadCell>
        最新
        <SortMark />
      </HeadCell>
      <HeadCell $active>
        涨幅
        <SortDownIcon />
      </HeadCell>
      <HeadCell>
        涨跌
        <SortMark />
      </HeadCell>
    </TableHead>

    <TableRow>
      <div>
        <StockName>普拉格能源</StockName>
        <StockCode>PLUG</StockCode>
      </div>
      <RowValue $pad={2}>3.810</RowValue>
      <RowValue $size={54}>34.63%</RowValue>
      <RowValue>0.980</RowValue>
      <RowOverflow>4</RowOverflow>
    </TableRow>

    <BottomBar>
      <IndexBlock>
        <IndexCaret />
        <IndexValue>46758.28</IndexValue>
        <IndexFoot>
          <span>道指</span>
          <b>0.51%</b>
        </IndexFoot>
      </IndexBlock>
      <Action>
        <PostIcon />
        发帖
      </Action>
      <Action>
        <ToolsIcon />
        功能
      </Action>
      <Action>
        <MoreIcon />
        设自选
      </Action>
    </BottomBar>

    <NavBar>
      <MenuKey />
      <HomeKey />
      <NavBackSlot>
        <BackKey />
      </NavBackSlot>
    </NavBar>
  </Page>
);

export default App;
